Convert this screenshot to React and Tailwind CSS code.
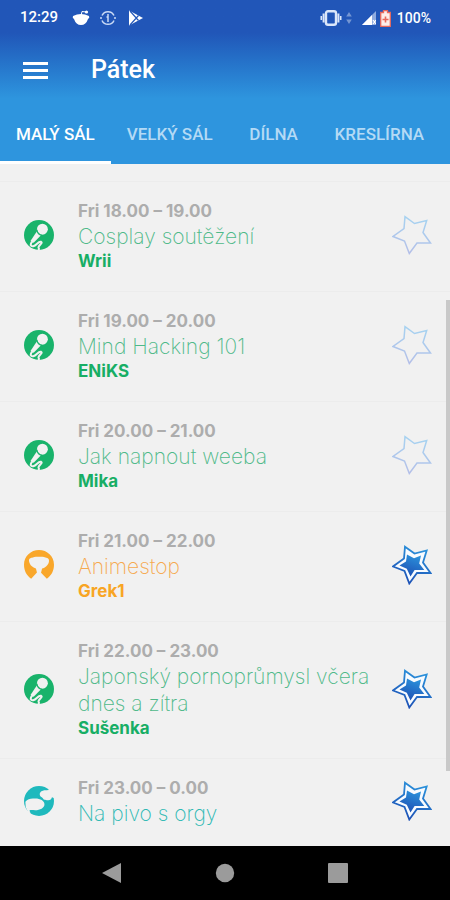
import React, { useState } from 'react';
import { clsx } from 'clsx';

const TABS = ['MALÝ SÁL', 'VELKÝ SÁL', 'DÍLNA', 'KRESLÍRNA'];

const EVENTS = [
  { id: 1, type: 'talk', time: 'Fri 18.00 – 19.00', title: 'Cosplay soutěžení', host: 'Wrii', starred: false },
  { id: 2, type: 'talk', time: 'Fri 19.00 – 20.00', title: 'Mind Hacking 101', host: 'ENiKS', starred: false },
  { id: 3, type: 'talk', time: 'Fri 20.00 – 21.00', title: 'Jak napnout weeba', host: 'Mika', starred: false },
  { id: 4, type: 'show', time: 'Fri 21.00 – 22.00', title: 'Animestop', host: 'Grek1', starred: true },
  { id: 5, type: 'talk', time: 'Fri 22.00 – 23.00', title: 'Japonský pornoprůmysl včera dnes a zítra', host: 'Sušenka', starred: true },
  { id: 6, type: 'party', time: 'Fri 23.00 – 0.00', title: 'Na pivo s orgy', host: null, starred: true },
];

const TITLE_COLOR = { talk: 'text-[#4fb989]', show: 'text-[#f6a94f]', party: 'text-[#2fb9b4]' };
const HOST_COLOR = { talk: 'text-[#17ae65]', show: 'text-[#f8a524]', party: 'text-[#1fb9b9]' };

const STAR = '13,1.7 22.5,8.5 34.7,5.5 31,17.5 38.5,28 25,28 17.3,38.5 12.5,26 1,21.5 12,13.5';
const STAR_CORE = '15,9.5 22,13.2 29,10.5 27.2,18.5 32.3,25 22.6,25 18.5,31.5 14.8,23.8 7.5,20.5 14,16.5';

function TypeIcon({ type }) {
  if (type === 'talk') {
    return (
      <svg viewBox="0 0 88 88" className="mb-0.5 size-[30px] shrink-0" aria-hidden="true">
        <circle cx="44" cy="44" r="44" fill="#19b36b" />
        <circle cx="54" cy="27" r="16" fill="#f1f1f1" />
        <path d="M38 33 L50 45 L29 66 Q20 68 20 60 Z" fill="#f1f1f1" />
        <path d="M37 28 Q40 43 55 46" fill="none" stroke="#19b36b" strokeWidth="4" />
        <path d="M23 64 Q15 78 27 77 C37 75 42 61 50 64 C57 68 39 76 43 82 Q45 84 42 90" fill="none" stroke="#f1f1f1" strokeWidth="6" />
      </svg>
    );
  }
  if (type === 'show') {
    return (
      <svg viewBox="0 0 88 88" className="mb-0.5 size-[30px] shrink-0" aria-hidden="true">
        <path d="M44 0 C20 0 0 18 0 43 C0 61 8 75 21 84 L38 66 L35 54 C26 52 17 45 15 34 C13 25 19 23 26 22 C32 18 37 20 44 20 C51 20 57 18 63 22 C70 23 75 26 73 35 C71 45 62 52 53 54 L50 67 L67 84 C80 75 88 61 88 43 C88 18 68 0 44 0 Z" fill="#f9a72b" />
      </svg>
    );
  }
  return (
    <svg viewBox="0 0 88 88" className="mb-0.5 size-[30px] shrink-0" aria-hidden="true">
      <circle cx="44" cy="44" r="44" fill="#1fb9bd" />
      <path d="M4 46 C11 37 21 36 33 37 C48 37 60 44 60 54 C60 64 47 71 33 71 C26 71 20 69 16 72 L20 82 L12 76 L5 62 Z" fill="#f1f1f1" />
      <path d="M80 12 C70 13 62 11 53 15 C44 19 44 29 52 33 C57 36 56 41 62 40 C74 44 80 41 82 33 L90 36 L90 12 Z" fill="#f1f1f1" />
    </svg>
  );
}

function StarIcon({ filled }) {
  return (
    <svg viewBox="0 0 40 40" className="size-10" aria-hidden="true">
      <defs>
        <linearGradient id="starFill" x1="0.7" y1="0" x2="0.3" y2="1">
          <stop offset="0" stopColor="#2b93dc" />
          <stop offset="1" stopColor="#1d4fb4" />
        </linearGradient>
        <linearGradient id="starLine" x1="0.6" y1="0" x2="0.4" y2="1">
          <stop offset="0" stopColor="#a6d3f1" />
          <stop offset="1" stopColor="#b4bfe8" />
        </linearGradient>
      </defs>
      {filled ? (
        <>
          <polygon points={STAR} fill="#f7fbff" stroke="url(#starFill)" strokeWidth="1.8" />
          <polygon points={STAR_CORE} fill="url(#starFill)" />
        </>
      ) : (
        <polygon points={STAR} fill="none" stroke="url(#starLine)" strokeWidth="1.5" />
      )}
    </svg>
  );
}

function StatusBar() {
  return (
    <div className="flex h-9 items-center justify-between pr-[19px] pl-5 text-sm text-white">
      <div className="flex items-center">
        <span className="w-[52px] text-[15px] font-medium">12:29</span>
        <svg viewBox="0 0 18 16" className="h-4 w-[18px]" fill="#fff" aria-hidden="true">
          <path d="M1 6 Q9 2 17 6 Q18 8 16 9 Q14 15 9 15 Q4 15 2 9 Q0 8 1 6 Z" />
          <path d="M9 6 L10 1.5 L14 2" fill="none" stroke="#fff" />
          <circle cx="14.5" cy="2" r="1.6" />
        </svg>
        <svg viewBox="0 0 16 16" className="ml-2.5 size-4" fill="none" stroke="#c9daf5" strokeWidth="1.5" aria-hidden="true">
          <path d="M2 5.5 A6.6 6.6 0 0 1 14 5.5 M14 10.5 A6.6 6.6 0 0 1 2 10.5 M0 8 H2 M14 8 H16 M8 4 V12 M6.5 7 H8" />
        </svg>
        <svg viewBox="0 0 16 16" className="ml-3 size-4" aria-hidden="true">
          <path d="M1 0.5 L15 8 L1 15.5 Z" fill="#fff" />
          <path d="M2 1 L10.5 10.5 M2 15 L10.5 5.5" stroke="#2459ba" strokeWidth="1.2" />
        </svg>
      </div>
      <div className="flex items-center">
        <svg viewBox="0 0 22 16" className="h-4 w-[22px]" fill="#dbe7fa" aria-hidden="true">
          <rect x="0.5" y="6" width="1.6" height="4" />
          <rect x="2.6" y="3.5" width="2" height="9" />
          <rect x="17.4" y="3.5" width="2" height="9" />
          <rect x="19.9" y="6" width="1.6" height="4" />
          <rect x="6" y="1.2" width="10" height="13.6" rx="2" fill="none" stroke="#dbe7fa" strokeWidth="2.4" />
        </svg>
        <svg viewBox="0 0 6 14" className="ml-1 h-3.5 w-1.5" fill="#7596d3" aria-hidden="true">
          <path d="M3 1 L5.8 5.5 H0.2 Z M3 13 L0.2 8.5 H5.8 Z" />
        </svg>
        <svg viewBox="0 0 14 14" className="ml-2.5 size-3.5" aria-hidden="true">
          <path d="M14 0 V14 H0 Z" fill="#8fabdf" />
          <path d="M10 4 V14 H0 Z" fill="#fff" />
          <path d="M11 9 L14 13 M14 9 L11 13" stroke="#fff" strokeWidth="1.2" />
        </svg>
        <svg viewBox="0 0 11 17" className="ml-1 h-[17px] w-[11px]" aria-hidden="true">
          <path d="M3.5 0.7 H7.5 V2.5 H10.3 V16.3 H0.7 V2.5 H3.5 Z" fill="#fdeeea" stroke="#e8695c" strokeWidth="1.3" />
          <path d="M5.5 6.5 V12.5 M2.5 9.5 H8.5" stroke="#e8695c" strokeWidth="1.6" />
        </svg>
        <span className="ml-1.5 font-medium">100%</span>
      </div>
    </div>
  );
}

function EventRow({ event, onToggle }) {
  return (
    <li className="flex items-center border-t border-[#ececec] pt-[17px] pr-[18px] pb-[18px] pl-6">
      <TypeIcon type={event.type} />
      <div className="ml-6 min-w-0 flex-1">
        <p className="text-[17px] leading-6 font-bold text-[#adadad]">{event.time}</p>
        <h2 className={clsx('text-[21px] leading-[27px] font-extralight', TITLE_COLOR[event.type])}>{event.title}</h2>
        {event.host && <p className={clsx('text-[17px] leading-[23px] font-bold', HOST_COLOR[event.type])}>{event.host}</p>}
      </div>
      <button type="button" aria-label={`Oblíbené: ${event.title}`} aria-pressed={event.starred} onClick={() => onToggle(event.id)} className="mb-0.5 shrink-0">
        <StarIcon filled={event.starred} />
      </button>
    </li>
  );
}

export default function App() {
  const [activeTab, setActiveTab] = useState(TABS[0]);
  const [events, setEvents] = useState(EVENTS);

  const toggleStar = (id) => {
    setEvents(events.map((e) => (e.id === id ? { ...e, starred: !e.starred } : e)));
  };

  return (
    <div className="flex min-h-screen flex-col bg-[#f1f1f1] font-['Roboto',sans-serif]">
      {/* HEADER */}
      <header className="bg-linear-to-b from-[#2156b8] from-20% to-[#2e95de] to-60%">
        <StatusBar />
        <div className="flex h-[68px] items-center pl-[23px]">
          <button type="button" aria-label="Menu" className="flex w-[25px] flex-col gap-1">
            <span className="h-[3px] bg-white" />
            <span className="h-[3px] bg-white" />
            <span className="h-[3px] bg-white" />
          </button>
          <h1 className="ml-[43px] text-[25px] font-medium text-white">Pátek</h1>
        </div>
        <nav className="flex h-[60px] overflow-hidden">
          {TABS.map((tab) => (
            <button
              key={tab}
              type="button"
              onClick={() => setActiveTab(tab)}
              className={clsx(
                'min-w-[90px] shrink-0 border-b-3 px-4 pt-1 text-[17px] font-medium whitespace-nowrap',
                tab === activeTab ? 'border-white text-white' : 'border-transparent text-[#b4daf5]'
              )}
            >
              {tab}
            </button>
          ))}
        </nav>
      </header>

      {/* PROGRAM */}
      <main className="relative flex-1 pt-[17px] font-['Inter',sans-serif]">
        <ul>
          {events.map((event) => (
            <EventRow key={event.id} event={event} onToggle={toggleStar} />
          ))}
        </ul>
        <div className="absolute top-[20%] right-0 h-[69%] w-1 bg-[#c9c9c9]" />
      </main>

      {/* SYSTEM NAVIGATION */}
      <footer className="flex h-[54px] items-center justify-center gap-[93px] bg-black">
        <button type="button" aria-label="Back">
          <svg viewBox="0 0 20 20" className="size-5" fill="#9b9b9b" aria-hidden="true"><path d="M19 0 V20 L0 10 Z" /></svg>
        </button>
        <button type="button" aria-label="Home">
          <svg viewBox="0 0 20 20" className="size-5" fill="#9b9b9b" aria-hidden="true"><circle cx="10" cy="10" r="9.2" /></svg>
        </button>
        <button type="button" aria-label="Recent apps">
          <svg viewBox="0 0 20 20" className="size-5" fill="#9b9b9b" aria-hidden="true"><rect width="20" height="20" rx="1" /></svg>
        </button>
      </footer>
    </div>
  );
}
